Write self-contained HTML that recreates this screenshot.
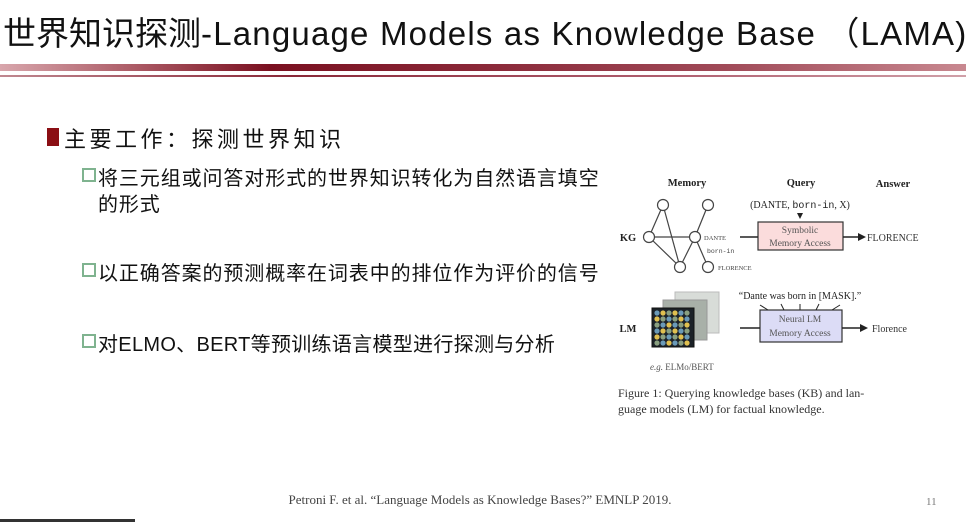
<!DOCTYPE html>
<html><head><meta charset="utf-8"><style>
body{margin:0;width:966px;height:522px;background:#fff;position:relative;overflow:hidden;font-family:"Liberation Sans","Noto Sans CJK SC",sans-serif;}
.a{position:absolute;white-space:nowrap;}
.t{left:3px;top:7px;font-size:33px;color:#111;}
.sb{width:10px;height:10px;border:2px solid #7fb38f;background:#fff;position:absolute;}
.s{font-size:20px;color:#111;letter-spacing:0.9px;}
</style></head><body>
<div class="a t">世界知识探测<span style="letter-spacing:1.2px">-Language Models as Knowledge Base （LAMA)</span></div>
<div class="a" style="left:0;top:64px;width:966px;height:7px;background:linear-gradient(90deg,#d8a6ac 0%,#a85560 15%,#7a1020 28%,#8a2838 50%,#a04a58 75%,#c88890 100%);"></div>
<div class="a" style="left:0;top:75px;width:966px;height:2px;background:linear-gradient(90deg,#c08890,#8a2838 30%,#b06070 70%,#d0a0a8);"></div>
<div class="a" style="left:47px;top:128px;width:12px;height:18px;background:#8b0f14;"></div>
<div class="a" style="left:64px;top:122px;font-size:22px;color:#111;letter-spacing:3.5px;">主要工作：探测世界知识</div>
<div class="sb" style="left:82px;top:168px"></div>
<div class="a s" style="left:98px;top:162px;">将三元组或问答对形式的世界知识转化为自然语言填空</div>
<div class="a s" style="left:98px;top:188px;">的形式</div>
<div class="sb" style="left:82px;top:263px"></div>
<div class="a s" style="left:98px;top:257px;">以正确答案的预测概率在词表中的排位作为评价的信号</div>
<div class="sb" style="left:82px;top:334px"></div>
<div class="a s" style="left:98px;top:328px;letter-spacing:0.3px;">对ELMO、BERT等预训练语言模型进行探测与分析</div>
<svg class="a" style="left:0;top:0" width="966" height="522" font-family="Liberation Serif,serif">
<g fill="#222" font-size="10.5" font-weight="bold" text-anchor="middle">
<text x="687" y="186">Memory</text><text x="801" y="186">Query</text><text x="893" y="187">Answer</text>
<text x="628" y="241">KG</text><text x="628" y="332">LM</text></g>
<g stroke="#444" stroke-width="1.2" fill="none">
<line x1="663" y1="205" x2="649" y2="237"/><line x1="663" y1="205" x2="680" y2="267"/><line x1="649" y1="237" x2="695" y2="237"/><line x1="708" y1="205" x2="695" y2="237"/><line x1="695" y1="237" x2="680" y2="267"/><line x1="649" y1="237" x2="680" y2="267"/><line x1="695" y1="237" x2="708" y2="267"/></g>
<g stroke="#444" stroke-width="1.2" fill="#fff">
<circle cx="663" cy="205" r="5.5"/><circle cx="708" cy="205" r="5.5"/><circle cx="649" cy="237" r="5.5"/><circle cx="695" cy="237" r="5.5"/><circle cx="680" cy="267" r="5.5"/><circle cx="708" cy="267" r="5.5"/></g>
<g fill="#444" font-size="6.5"><text x="704" y="240">DANTE</text><text x="707" y="253" font-family="Liberation Mono,monospace">born-in</text><text x="718" y="270">FLORENCE</text></g>
<text x="800" y="208" font-size="10" fill="#222" text-anchor="middle">(DANTE, <tspan font-family="Liberation Mono,monospace">born-in</tspan>, X)</text>
<path d="M797 213 L803 213 L800 219Z" fill="#222"/>
<rect x="758" y="222" width="85" height="28" fill="#fbdcdc" stroke="#333" stroke-width="1.2"/>
<rect x="760" y="310" width="82" height="32" fill="#dcdcf6" stroke="#333" stroke-width="1.2"/>
<g font-size="9.5" fill="#555" text-anchor="middle"><text x="800" y="233">Symbolic</text><text x="800" y="246">Memory Access</text>
<text x="800" y="322">Neural LM</text><text x="800" y="336">Memory Access</text></g>
<g stroke="#222" stroke-width="1.6"><line x1="740" y1="237" x2="758" y2="237"/><line x1="843" y1="237" x2="860" y2="237"/><line x1="740" y1="328" x2="760" y2="328"/><line x1="842" y1="328" x2="862" y2="328"/></g>
<path d="M858 233 L866 237 L858 241Z M860 324 L868 328 L860 332Z" fill="#222"/>
<text x="867" y="241" font-size="10" fill="#333">FLORENCE</text>
<text x="872" y="332" font-size="10" fill="#333">Florence</text>
<text x="800" y="299" font-size="10" fill="#222" text-anchor="middle">“Dante was born in [MASK].”</text>
<g stroke="#222" stroke-width="1"><line x1="760" y1="305" x2="768" y2="310"/><line x1="781" y1="304" x2="784" y2="310"/><line x1="800" y1="304" x2="800" y2="310"/><line x1="819" y1="304" x2="816" y2="310"/><line x1="840" y1="305" x2="832" y2="310"/></g>
<rect x="675" y="292" width="44" height="41" fill="#d8dcd8" stroke="#bbb"/>
<rect x="663" y="300" width="44" height="40" fill="#a8b0a8" stroke="#999"/>
<rect x="652" y="308" width="42" height="39" fill="#1c2228" stroke="#111"/>
<g>
<circle cx="657" cy="313" r="2.6" fill="#6a9ab8"/><circle cx="663" cy="313" r="2.6" fill="#e0c050"/><circle cx="669" cy="313" r="2.6" fill="#8aa080"/><circle cx="675" cy="313" r="2.6" fill="#e0c050"/><circle cx="681" cy="313" r="2.6" fill="#6a9ab8"/><circle cx="687" cy="313" r="2.6" fill="#8aa080"/>
<circle cx="657" cy="319" r="2.6" fill="#e0c050"/><circle cx="663" cy="319" r="2.6" fill="#8aa080"/><circle cx="669" cy="319" r="2.6" fill="#6a9ab8"/><circle cx="675" cy="319" r="2.6" fill="#8aa080"/><circle cx="681" cy="319" r="2.6" fill="#e0c050"/><circle cx="687" cy="319" r="2.6" fill="#6a9ab8"/>
<circle cx="657" cy="325" r="2.6" fill="#8aa080"/><circle cx="663" cy="325" r="2.6" fill="#6a9ab8"/><circle cx="669" cy="325" r="2.6" fill="#e0c050"/><circle cx="675" cy="325" r="2.6" fill="#6a9ab8"/><circle cx="681" cy="325" r="2.6" fill="#8aa080"/><circle cx="687" cy="325" r="2.6" fill="#e0c050"/>
<circle cx="657" cy="331" r="2.6" fill="#6a9ab8"/><circle cx="663" cy="331" r="2.6" fill="#e0c050"/><circle cx="669" cy="331" r="2.6" fill="#8aa080"/><circle cx="675" cy="331" r="2.6" fill="#e0c050"/><circle cx="681" cy="331" r="2.6" fill="#6a9ab8"/><circle cx="687" cy="331" r="2.6" fill="#8aa080"/>
<circle cx="657" cy="337" r="2.6" fill="#e0c050"/><circle cx="663" cy="337" r="2.6" fill="#8aa080"/><circle cx="669" cy="337" r="2.6" fill="#6a9ab8"/><circle cx="675" cy="337" r="2.6" fill="#8aa080"/><circle cx="681" cy="337" r="2.6" fill="#e0c050"/><circle cx="687" cy="337" r="2.6" fill="#6a9ab8"/>
<circle cx="657" cy="343" r="2.6" fill="#8aa080"/><circle cx="663" cy="343" r="2.6" fill="#6a9ab8"/><circle cx="669" cy="343" r="2.6" fill="#e0c050"/><circle cx="675" cy="343" r="2.6" fill="#6a9ab8"/><circle cx="681" cy="343" r="2.6" fill="#8aa080"/><circle cx="687" cy="343" r="2.6" fill="#e0c050"/></g>
<text x="650" y="370" font-size="9" fill="#555"><tspan font-style="italic">e.g.</tspan> ELMo/BERT</text>
<g font-size="12" fill="#333"><text x="618" y="397">Figure 1:  Querying knowledge bases (KB) and lan-</text><text x="618" y="413">guage models (LM) for factual knowledge.</text></g>
<text x="480" y="504" font-size="13" fill="#444" text-anchor="middle">Petroni F. et al. “Language Models as Knowledge Bases?” EMNLP 2019.</text>
<text x="926" y="505" font-size="11" fill="#777">11</text>
</svg>
<div class="a" style="left:0;top:519px;width:135px;height:3px;background:#333;"></div>
</body></html>
